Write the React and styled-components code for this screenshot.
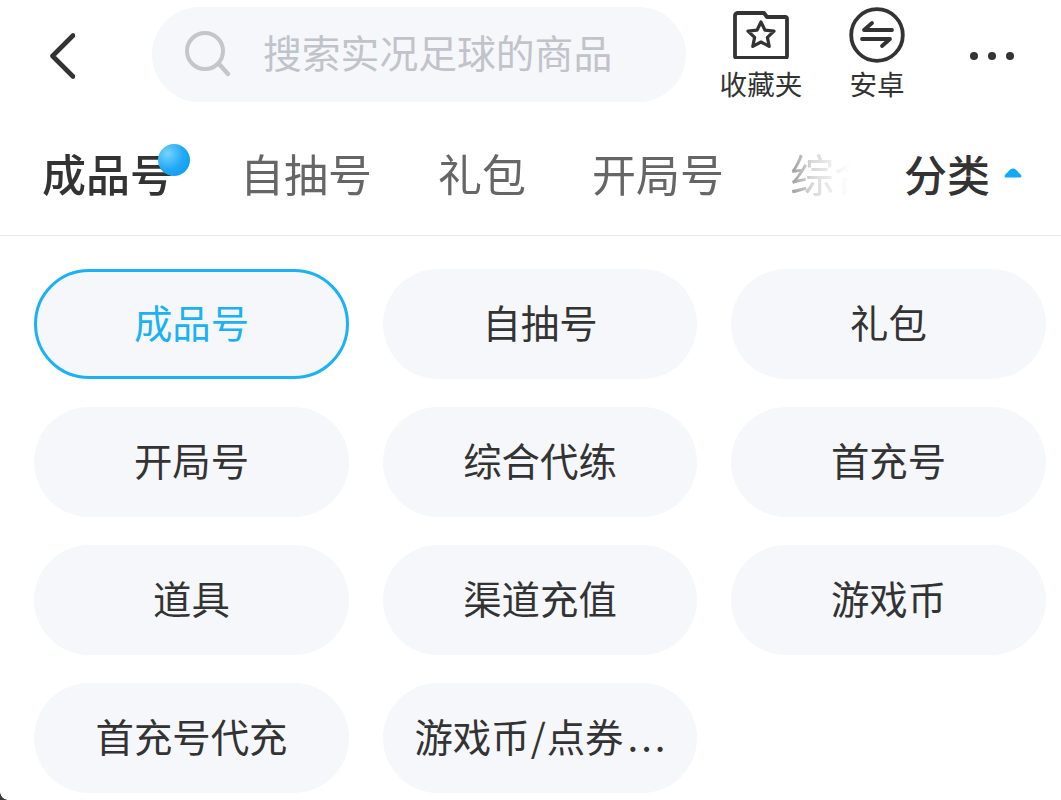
import React from "react";
import styled, { createGlobalStyle } from "styled-components";

const Global = createGlobalStyle`
  html, body { margin: 0; padding: 0; background: #fff; }
  body { width: 1061px; height: 800px; overflow: hidden; font-family: "Noto Sans CJK SC", "Noto Sans", sans-serif; }
  * { box-sizing: border-box; }
`;

const Page = styled.div`
  position: relative;
  width: 1061px;
  height: 800px;
  overflow: hidden;
  background: #fff;
`;
const Header = styled.header`
  display: flex;
  align-items: flex-start;
  height: 130px;
  padding: 7px 0 0 47px;
`;
const BackButton = styled.div`
  width: 105px;
  height: 95px;
  display: flex;
  align-items: center;
  padding-top: 3px;
`;
const SearchBox = styled.div`
  width: 534px;
  height: 95px;
  border-radius: 47.5px;
  background: #f6f7fb;
  display: flex;
  align-items: center;
  padding-left: 32px;
  gap: 33px;
`;
const SearchIcon = styled.svg`
  flex: none;
  margin-top: -2px;
`;
const Placeholder = styled.span`
  font-size: 38.8px;
  line-height: 1;
  color: #c0c3c9;
  white-space: nowrap;
  padding-bottom: 6px;
  margin-left: -1px;
`;
const Action = styled.div`
  width: ${p => p.$w}px;
  margin-left: ${p => p.$ml}px;
  display: flex;
  flex-direction: column;
  align-items: center;
`;
const IconSlot = styled.div`
  height: 61px;
  padding-top: ${p => p.$top}px;
`;
const ActionLabel = styled.span`
  font-size: 27.6px;
  line-height: 30px;
  color: #333;
  white-space: nowrap;
`;
const Dots = styled.div`
  display: flex;
  gap: 10px;
  margin-left: 65px;
  margin-top: 45px;
`;
const Dot = styled.i`
  width: 8px;
  height: 8px;
  border-radius: 50%;
  background: #333;
`;
const TabBar = styled.nav`
  display: flex;
  align-items: center;
  height: 106px;
  border-bottom: 1px solid #e9eaec;
  padding: 0 0 19px 42px;
`;
const TabList = styled.div`
  width: 808px;
  display: flex;
  align-items: center;
  gap: 66px;
  overflow: hidden;
  -webkit-mask-image: linear-gradient(to right, #000 730px, rgba(0,0,0,.25) 770px, transparent 808px);
  mask-image: linear-gradient(to right, #000 730px, rgba(0,0,0,.25) 770px, transparent 808px);
  padding-top: 10px;
  margin-top: -10px;
`;
const Tab = styled.span`
  position: relative;
  flex: none;
  font-size: 44px;
  line-height: 56px;
  font-weight: ${p => (p.$active ? 500 : 400)};
  color: ${p => (p.$active ? "#333" : "#666")};
  white-space: nowrap;
`;
const Badge = styled.i`
  position: absolute;
  right: -16px;
  top: -1px;
  width: 32px;
  height: 32px;
  border-radius: 50%;
  background: radial-gradient(circle at 30% 30%, #74d4fc 0%, #22a9f5 50%, #0595ec 100%);
`;
const CategoryToggle = styled.div`
  display: flex;
  align-items: center;
  margin-left: 54px;
  gap: 14px;
`;
const CategoryLabel = styled.span`
  font-size: 43px;
  line-height: 56px;
  font-weight: 500;
  color: #333;
  white-space: nowrap;
`;
const Grid = styled.div`
  display: grid;
  grid-template-columns: 315px 314px 315px;
  grid-auto-rows: 110px;
  column-gap: 34px;
  row-gap: 28px;
  padding: 33px 0 0 34px;
`;
const Chip = styled.div`
  border-radius: 55px;
  display: flex;
  align-items: center;
  justify-content: center;
  font-size: 38.4px;
  line-height: 1;
  padding-bottom: 6px;
  white-space: nowrap;
  background: #f6f7fb;
  color: ${p => (p.$active ? "#1cb1f5" : "#333")};
  border: ${p => (p.$active ? "3px solid #1cb1f5" : "none")};
`;
const Ellipsis = styled.span`
  letter-spacing: 3px;
  margin-left: 4px;
  margin-right: -3px;
`;
const Slash = styled.span`
  margin: 0 1px;
`;
const Corner = styled.div`
  position: absolute;
  left: 0;
  bottom: 0;
  width: 8px;
  height: 8px;
  background: radial-gradient(circle at 100% 0, transparent 7.5px, #3a3a3a 8px);
`;

const items = ["成品号","自抽号","礼包","开局号","综合代练","首充号","道具","渠道充值","游戏币","首充号代充"];
const tabs = ["自抽号","礼包","开局号","综合代练"];

export default function App() {
  return (
    <Page>
      <Global />
      <Header>
        <BackButton>
          <svg width="28" height="46" viewBox="0 0 28 46" fill="none">
            <path d="M26 2.500 5.500 23 26 43.500" stroke="#333" strokeWidth="4.600" strokeLinecap="round" strokeLinejoin="round" />
          </svg>
        </BackButton>
        <SearchBox>
          <SearchIcon width="47" height="47" viewBox="0 0 47 47" fill="none">
            <circle cx="21" cy="21" r="18" stroke="#c3c6cb" strokeWidth="4" />
            <path d="M36 35l8 9" stroke="#c3c6cb" strokeWidth="4.400" strokeLinecap="round" />
          </SearchIcon>
          <Placeholder>搜索实况足球的商品</Placeholder>
        </SearchBox>
        <Action $w={82} $ml={34}>
          <IconSlot $top={2}>
            <svg width="56" height="50" viewBox="0 0 56 50" fill="none">
              <path d="M2 7a3 3 0 0 1 2-3h27l3 4h18a2 2 0 0 1 2 2v37a2 2 0 0 1-2 2H4a2 2 0 0 1-2-2z" stroke="#333" strokeWidth="3.800" strokeLinejoin="round" />
              <path d="m28 13 4 8.200 9 1-6.600 6.200 1.800 9L28 33l-8.200 4.400 1.800-9L15 22.200l9-1z" stroke="#333" strokeWidth="3.200" strokeLinejoin="round" />
            </svg>
          </IconSlot>
          <ActionLabel>收藏夹</ActionLabel>
        </Action>
        <Action $w={56} $ml={47}>
          <IconSlot $top={0}>
            <svg width="56" height="56" viewBox="0 0 56 56" fill="none">
              <circle cx="28" cy="28" r="25.800" stroke="#333" strokeWidth="3.800" />
              <path d="M43 23H15l8-7M13 32h28l-8 7" stroke="#333" strokeWidth="3.800" strokeLinecap="round" strokeLinejoin="round" />
            </svg>
          </IconSlot>
          <ActionLabel>安卓</ActionLabel>
        </Action>
        <Dots><Dot /><Dot /><Dot /></Dots>
      </Header>
      <TabBar>
        <TabList>
          <Tab $active>成品号<Badge /></Tab>
          {tabs.map(t => <Tab key={t}>{t}</Tab>)}
        </TabList>
        <CategoryToggle>
          <CategoryLabel>分类</CategoryLabel>
          <svg width="18" height="10" viewBox="0 0 18 10">
            <path d="M9 .5C12 .5 14 4 17 7c1 1.500 0 2.500-1 2.500H2C1 9.500 0 8.500 1 7 4 4 6 .5 9 .5z" fill="#12aaf5" />
          </svg>
        </CategoryToggle>
      </TabBar>
      <Grid>
        {items.map((t, i) => <Chip key={t} $active={i === 0}>{t}</Chip>)}
        <Chip>游戏币<Slash>/</Slash>点券<Ellipsis>...</Ellipsis></Chip>
      </Grid>
      <Corner />
    </Page>
  );
}
